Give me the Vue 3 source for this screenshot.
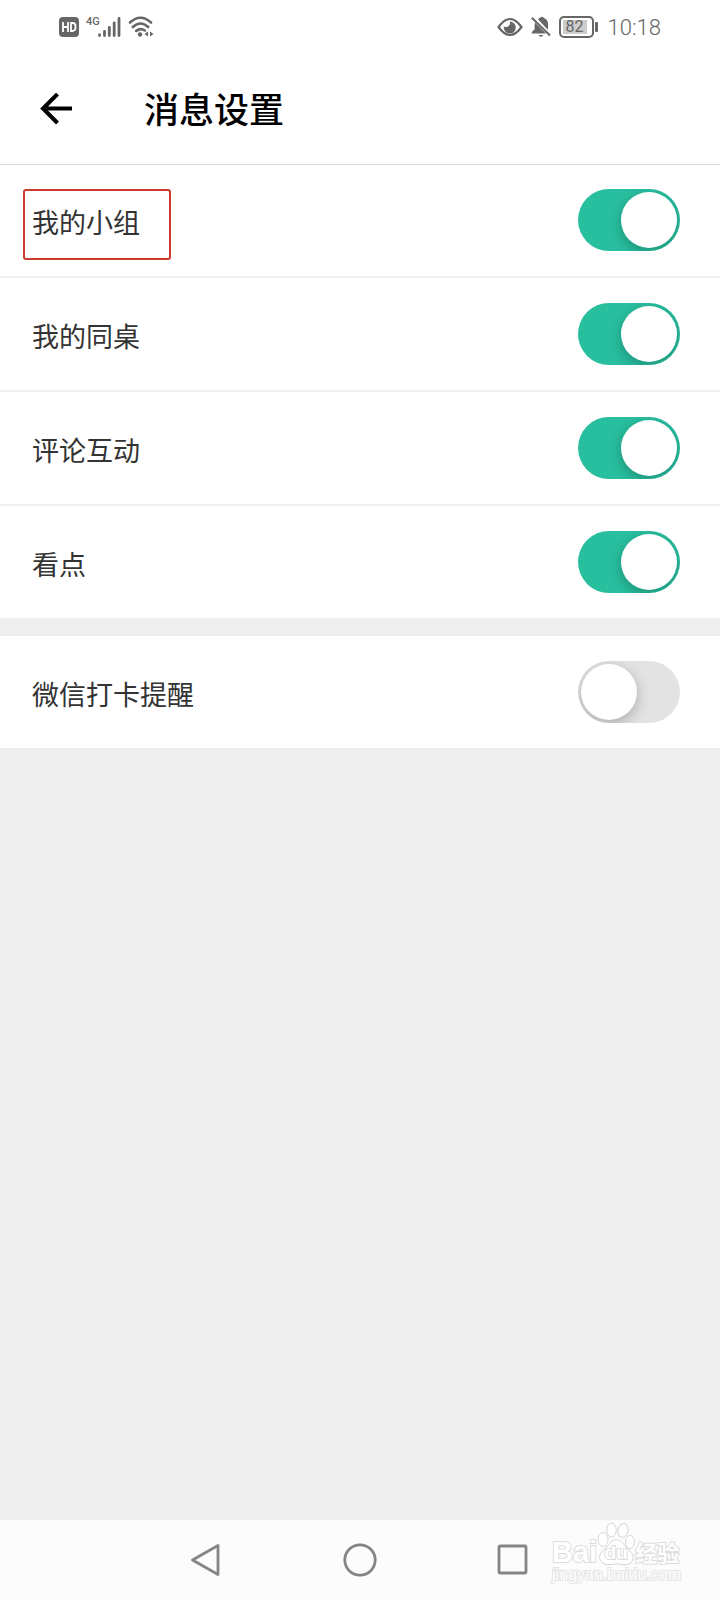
<template>
  <div class="screen">
    <div class="status-bar">
      <div class="status-group">
        <svg class="icon" width="20" height="20" viewBox="0 0 20 20">
          <rect width="20" height="20" rx="4" fill="#666" />
          <path d="M4 5v10M9 5v10M4 10h5M12 6v8h1.500a3 3 0 0 0 3-3v-2a3 3 0 0 0-3-3z" fill="none" stroke="#fff" stroke-width="1.800" />
        </svg>
        <div class="signal">
          <span class="network">4G</span>
          <svg width="24" height="22" viewBox="0 0 24 22" stroke="#666" stroke-width="2.800" stroke-linecap="round">
            <path d="M2.500 19.500v-.8M7.500 19.500v-4M12.300 19.500v-8M17.200 19.500v-12.500M22 19.500v-17" />
          </svg>
        </div>
        <svg class="icon" width="26" height="22" viewBox="0 0 26 22" fill="none" stroke="#666" stroke-width="2.600" stroke-linecap="round">
          <path d="M2 6.500Q12.500-3 23 6.500M4.800 11Q12.500 4 20.200 11M8.200 15Q12.500 11.500 16.800 14.500" />
          <circle cx="12" cy="18.500" r="2.200" fill="#666" stroke="none" />
          <path d="M20 15.500v5l-3.500-2.500zM22 15.500v5l3.500-2.500z" fill="#666" stroke="none" />
        </svg>
      </div>
      <div class="status-group right">
        <svg width="26" height="20" viewBox="0 0 26 20">
          <path d="M1.500 10Q13-6 24.500 10Q13 26 1.500 10z" fill="none" stroke="#666" stroke-width="2.200" />
          <path d="M12.500 4.500a6 6 0 1 1-5.600 5q3 1.500 5-.7t.6-4.300z" fill="#666" />
        </svg>
        <svg width="20" height="22" viewBox="0 0 20 22">
          <path d="M7 3.200Q8 2 9 1.800q2-2 4 .2q4 1.500 4 6v6zM3.800 6.500L15 17.500H.8v-1.500l2.700-2.500zM7.500 19h5q-2.500 3.500-5 0z" fill="#666" />
          <path d="M.8 1.800L19 19.500" stroke="#666" stroke-width="2" />
        </svg>
        <div class="battery"><span class="battery-level">82</span></div>
        <span class="time">10:18</span>
      </div>
    </div>

    <header class="header">
      <button class="back" type="button" aria-label="返回">
        <svg width="32" height="32" viewBox="0 0 32 32" fill="none" stroke="#000" stroke-width="4">
          <path d="M32 15.500H3M17.500 1L3 15.500l14.500 14.500" />
        </svg>
      </button>
      <h1>消息设置</h1>
    </header>

    <main class="content">
      <section v-for="(group, i) in groups" :key="i" class="group">
        <label v-for="item in group" :key="item.label" class="row">
          <span class="label" :class="{ marked: item.marked }">{{ item.label }}</span>
          <input v-model="item.on" class="switch" type="checkbox" role="switch" />
        </label>
      </section>
    </main>

    <nav class="nav-bar">
      <button type="button" aria-label="返回键">
        <svg width="34" height="34" viewBox="0 0 34 34">
          <path d="M29 2.500v29L3.500 17z" />
        </svg>
      </button>
      <button type="button" aria-label="主页">
        <svg width="34" height="34" viewBox="0 0 34 34">
          <circle cx="17" cy="17" r="15.200" />
        </svg>
      </button>
      <button type="button" aria-label="最近任务">
        <svg width="34" height="34" viewBox="0 0 34 34">
          <rect x="2" y="3" width="27" height="27" rx="1" />
        </svg>
      </button>
      <div class="watermark">
        <div class="brand">
          <span class="brand-latin">Bai</span>
          <span class="paw">
            <svg width="38" height="44" viewBox="0 0 38 44" fill="#fff" stroke="#d6d6d6">
              <ellipse cx="6" cy="17.500" rx="5" ry="7" />
              <ellipse cx="14.500" cy="8" rx="4.800" ry="7" />
              <ellipse cx="26" cy="8.500" rx="5" ry="6.800" transform="rotate(12 26 8.500)" />
              <ellipse cx="33" cy="20" rx="4.500" ry="6.500" />
              <path d="M19.500 17.500q4 0 7.500 5q2 3 6 6.500q5 4.500 2.500 9.500q-3 5.500-9.500 4q-6-1.200-12 0q-8 1-10.500-4t2-9.500q4-3 6.500-6.500q3-5 7.500-5z" />
            </svg>
            <span class="paw-text">du</span>
          </span>
          <span class="brand-cn">经验</span>
        </div>
        <div class="site">jingyan.baidu.com</div>
      </div>
    </nav>
  </div>
</template>

<script setup>
import { reactive } from 'vue'

const groups = reactive([
  [
    { label: '我的小组', on: true, marked: true },
    { label: '我的同桌', on: true },
    { label: '评论互动', on: true },
    { label: '看点', on: true }
  ],
  [{ label: '微信打卡提醒', on: false }]
])
</script>

<style>
body { margin: 0; background: #efefef; }
</style>

<style scoped>
.screen {
  display: flex; flex-direction: column;
  min-height: 100vh;
  background: #efefef;
  color: #333;
  font-family: "Liberation Sans", "Noto Sans CJK SC", sans-serif;
}
button { padding: 0; border: none; background: none; cursor: pointer; }
svg { display: block; flex: none; }

.status-bar {
  display: flex; justify-content: space-between; align-items: center;
  height: 53px; padding: 0 59px;
  background: #fff; color: #666;
}
.status-group { display: flex; align-items: center; gap: 7px; }
.signal { display: flex; align-items: center; }
.network {
  align-self: flex-start; margin-right: -3px;
  font: 500 11px/12px Roboto, sans-serif;
}
.right { gap: 8px; }
.battery {
  position: relative;
  box-sizing: border-box; width: 35px; height: 22px; padding: 2px;
  border: 2px solid #666; border-radius: 5px;
}
.battery::after {
  content: ''; position: absolute; right: -6px; top: 4px;
  width: 3px; height: 10px; border-radius: 1px; background: #666;
}
.battery-level {
  display: block; width: 24px; background: #ccc;
  font: 16px/14px Roboto, sans-serif; text-align: center;
}
.time { margin-left: 6px; padding-top: 2px; font: 300 22px/28px Roboto, sans-serif; }

.header {
  display: flex; align-items: center; gap: 72px;
  height: 111px; padding: 0 40px;
  background: #fff; box-shadow: 0 1px 0 #d8d8d8;
  z-index: 1;
}
.header h1 { margin: 0; padding-top: 4px; font-size: 35px; line-height: 48px; font-weight: 500; color: #000; }

.content { flex: 1; }
.group { background: #fff; }
.group + .group { margin-top: 18px; }
.row {
  display: flex; align-items: center; justify-content: space-between;
  height: 112px; padding: 0 40px 0 32px;
  cursor: pointer;
}
.row + .row { border-top: 2px solid #f0f0f0; }
.label { position: relative; padding-top: 8px; font-size: 27px; line-height: 40px; }
.marked::after {
  content: ''; position: absolute; top: -7px; right: -31px; bottom: -16px; left: -9px;
  border: 2px solid #cc3a30; border-radius: 3px;
}
.switch {
  appearance: none; position: relative; overflow: hidden;
  width: 102px; height: 62px; margin: 0;
  border-radius: 31px; background: #e3e3e3;
  cursor: pointer;
}
.switch::before {
  content: ''; position: absolute; top: 3px; left: 3px;
  width: 56px; height: 56px; border-radius: 50%;
  background: #fff; box-shadow: 0 4px 14px rgba(0, 0, 0, 0.25);
  transition: left 0.2s;
}
.switch:checked { background: #28bf9f; }
.switch:checked::before { left: 43px; }

.nav-bar {
  position: relative;
  display: flex; align-items: center; justify-content: center; gap: 120px;
  height: 80px; background: #fcfcfc;
}
.nav-bar button svg { fill: none; stroke: #858585; stroke-width: 2.8; stroke-linejoin: round; }
.watermark {
  position: absolute; right: 39px; top: 2px;
  color: #fff; -webkit-text-stroke: 2px #dcdcdc; paint-order: stroke fill;
}
.watermark svg { paint-order: normal; }
.brand { display: flex; align-items: flex-end; height: 44px; }
.brand-latin { font: bold 29px/28px "Liberation Sans", sans-serif; }
.paw { position: relative; }
.paw-text {
  position: absolute; left: 0; right: 0; bottom: 3px;
  font: bold 19px/20px "Liberation Sans", sans-serif; text-align: center;
}
.brand-cn { font: bold 22px/30px "Noto Sans CJK SC", sans-serif; }
.site { font: 16px/18px "Liberation Sans", sans-serif; -webkit-text-stroke: 2px #e4e4e4; }
</style>
